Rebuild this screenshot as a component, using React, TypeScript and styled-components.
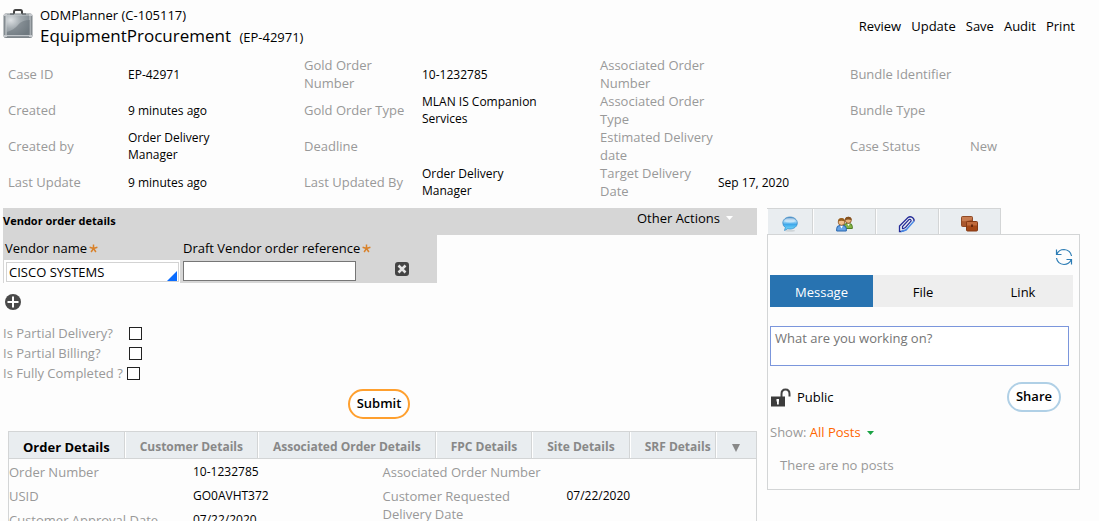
import React from "react";
import styled, { createGlobalStyle } from "styled-components";

const GlobalStyle = createGlobalStyle`
  *, *::before, *::after { box-sizing: border-box; }
  body {
    margin: 0;
    background: #fdfdfd;
    color: #000;
    font: 13px/18px "Open Sans", sans-serif;
  }
  button, input, textarea { font: inherit; color: inherit; margin: 0; }
  button { background: none; border: 0; padding: 0; cursor: pointer; }
  a { color: inherit; text-decoration: none; }
  svg { display: block; flex: none; }
  h1, h2, p, dl, dd { margin: 0; font-weight: 400; }
`;

const line = "#d3d5d6";
const muted = "#999";

const Page = styled.div`
  height: 100vh;
  overflow: hidden;
`;

const Header = styled.header`
  display: flex;
  align-items: flex-start;
  padding: 6px 24px 0 3px;
  height: 56px;
`;

const Titles = styled.div`
  flex: 1;
  padding-left: 7px;
`;

const Parent = styled.p`
  line-height: 18px;
`;

const Title = styled.h1`
  font-size: 17px;
  line-height: 24px;
  small { font-size: 13px; margin-left: 4px; }
`;

const Actions = styled.nav`
  display: flex;
  gap: 10px;
  padding-top: 11px;
`;

const Summary = styled.section`
  display: grid;
  grid-template-columns: 296fr 296fr 250fr 249fr;
  padding-left: 8px;
`;

const SummaryList = styled.dl<{ $label: number }>`
  display: grid;
  grid-template-columns: ${(p) => p.$label}px 1fr;
  grid-auto-rows: 36px;
  align-items: center;
`;

const Label = styled.dt`
  color: ${muted};
  padding-right: 4px;
`;

const Value = styled.dd<{ $muted?: boolean }>`
  max-width: 124px;
  font-size: ${(p) => (p.$muted ? 13 : 12)}px;
  line-height: 17px;
  color: ${(p) => (p.$muted ? muted : "#000")};
`;

const Body = styled.main`
  display: grid;
  grid-template-columns: minmax(0, 754fr) minmax(0, 313fr);
  gap: 10px;
  align-items: start;
  padding: 8px 19px 0 3px;
`;

const SectionBar = styled.div`
  display: flex;
  justify-content: space-between;
  height: 27px;
  padding-right: 24px;
  background: #d6d6d6;
`;

const SectionTitle = styled.h2`
  font-size: 11px;
  font-weight: 700;
  line-height: 26px;
`;

const OtherActions = styled.button`
  display: flex;
  align-items: center;
  gap: 6px;
  height: 20px;
`;

const VendorTable = styled.table`
  width: 434px;
  border-collapse: collapse;
  table-layout: fixed;
  background: #d6d6d6;
  th {
    height: 24px;
    padding: 2px 0 0 2px;
    text-align: left;
    font-weight: 400;
    white-space: nowrap;
  }
  td { height: 24px; padding: 0 2px; }
`;

const Required = styled.span`
  display: inline-block;
  padding-left: 2px;
  svg { display: inline; }
`;

const VendorCell = styled.div`
  position: relative;
  padding: 2px;
  height: 23px;
  margin: 0 -1px;
  background: #fff;
`;

const Corner = styled.svg`
  position: absolute;
  right: 3px;
  bottom: 2px;
  pointer-events: none;
`;

const TextInput = styled.input<{ $plain?: boolean }>`
  display: block;
  width: 173px;
  height: 20px;
  padding: 0 2px;
  background: #fff;
  border: 1px solid ${(p) => (p.$plain ? "#d3d3d3" : "#767676")};
  outline: 0;
`;

const IconButton = styled.button`
  display: block;
`;

const DeleteCell = styled.div`
  display: flex;
  justify-content: center;
  padding: 0 0 4px 8px;
`;

const AddRow = styled.div`
  padding: 11px 2px 13px;
`;

const CheckRow = styled.label<{ $wide: number }>`
  display: grid;
  grid-template-columns: ${(p) => p.$wide}px 13px;
  align-items: center;
  height: 20px;
  color: ${muted};
  white-space: nowrap;
`;

const CheckBox = styled.input`
  appearance: none;
  width: 13px;
  height: 13px;
  background: #fff;
  border: 1px solid #222;
`;

const Centered = styled.div`
  display: flex;
  justify-content: center;
  padding: 6px 2px 12px 0;
`;

const Pill = styled.button<{ $color: string; $width: number }>`
  width: ${(p) => p.$width}px;
  height: 30px;
  padding-bottom: 2px;
  border: 2px solid ${(p) => p.$color};
  border-radius: 15px;
  background: #fff;
  font-weight: 600;
`;

const DetailTabs = styled.div`
  display: flex;
  height: 28px;
  margin-left: 5px;
  background: #e9edf0;
  border: 1px solid ${line};
`;

const DetailTab = styled.button<{ $active?: boolean; $tight?: boolean }>`
  flex: none;
  margin-right: 1px;
  padding: 4px ${(p) => (p.$tight ? 4 : 14)}px 0 14px;
  border-right: 1px solid ${line};
  box-shadow: 1px 0 #fff;
  font-size: ${(p) => (p.$active ? 13 : 12)}px;
  font-weight: 700;
  color: ${(p) => (p.$active ? "#000" : "#888")};
  white-space: nowrap;
`;

const MoreTab = styled.button`
  flex: 1;
  display: flex;
  align-items: center;
  justify-content: center;
  padding-top: 5px;
`;

const DetailPanel = styled.div`
  display: grid;
  grid-template-columns: 1fr 1fr;
  min-height: 100px;
  margin-left: 5px;
  padding-top: 1px;
  border: solid ${line};
  border-width: 0 1px;
`;

const DetailList = styled.dl`
  display: grid;
  grid-template-columns: 184px 1fr;
  align-content: start;
  ${Label}, ${Value} { padding: 3px 0; line-height: 18px; }
  ${Label} { max-width: 162px; }
`;

const FeedTabs = styled.div`
  display: flex;
  height: 26px;
`;

const FeedTab = styled.button<{ $width: number }>`
  display: flex;
  align-items: center;
  justify-content: center;
  width: ${(p) => p.$width}px;
  padding-top: 4px;
  background: #e9edf0;
  border: solid ${line};
  border-width: 1px 1px 0 0;
  box-shadow: inset 1px 0 #fdfdfd;
`;

const Feed = styled.section`
  min-height: 256px;
  padding: 13px 6px 0 2px;
  border: 1px solid ${line};
`;

const RefreshRow = styled.div`
  display: flex;
  justify-content: flex-end;
`;

const Segments = styled.div`
  display: grid;
  grid-template-columns: 103fr 100fr 100fr;
  height: 32px;
  margin-top: 9px;
  background: #eee;
`;

const Segment = styled.button<{ $active?: boolean }>`
  padding-top: 2px;
  background: ${(p) => (p.$active ? "#2873b1" : "transparent")};
  color: ${(p) => (p.$active ? "#fff" : "#000")};
`;

const Composer = styled.textarea`
  display: block;
  width: calc(100% - 4px);
  height: 40px;
  margin-top: 19px;
  padding: 2px 4px;
  resize: none;
  background: #fff;
  border: 1px solid #7b96dc;
  outline: 0;
  &::placeholder { color: #757575; opacity: 1; }
`;

const ShareRow = styled.div`
  display: flex;
  align-items: center;
  justify-content: space-between;
  padding: 16px 12px 11px 0;
`;

const Visibility = styled.span`
  display: flex;
  align-items: center;
  gap: 6px;
`;

const Filter = styled.div`
  color: ${muted};
`;

const FilterButton = styled.button`
  color: #ff6600;
  svg { display: inline; margin-left: 6px; vertical-align: 2px; }
`;

const Empty = styled.p`
  padding: 15px 10px 0;
  color: ${muted};
`;

const Star = () => (
  <Required aria-hidden="true">
    <svg width="9" height="9" viewBox="0 0 9 9">
      <path d="M4.5 4.5V.5M4.5 4.5L8.4 3.2M4.5 4.5L6.9 8M4.5 4.5L2.1 8M4.5 4.5L.6 3.2" stroke="#d9822b" strokeWidth="1.5" />
    </svg>
  </Required>
);

const Briefcase = () => (
  <svg width="30" height="33" viewBox="0 0 30 33">
    <defs>
      <radialGradient id="case" cx=".2" cy=".25" r=".9">
        <stop offset="0" stopColor="#dde1e4" />
        <stop offset=".45" stopColor="#a4acb1" />
        <stop offset="1" stopColor="#7d878e" />
      </radialGradient>
    </defs>
    <path d="M11 8V6Q11 4 12.500 4H17.500Q19 4 19 6V8" fill="none" stroke="#444" strokeWidth="2" />
    <rect x="1" y="8" width="28" height="23.500" rx="1.500" fill="#8b9298" stroke="#7d8489" />
    <rect x="3" y="9" width="24" height="20.500" fill="url(#case)" stroke="#d0d4d7" strokeWidth=".8" />
    <path d="M4 26Q11 24 15 19T27 14V29H4Z" fill="#59646b" opacity=".4" />
    <path d="M1 9H4M26 9H29M1 30H4M26 30H29" stroke="#c4c8cc" strokeWidth="2" />
    <path d="M7 8H11M19 8H23" stroke="#4a5055" />
  </svg>
);

const Bubble = () => (
  <svg width="16" height="16" viewBox="0 0 16 16">
    <defs>
      <linearGradient id="bubble" x1="0" y1="0" x2="0" y2="1">
        <stop offset="0" stopColor="#5a8fc4" />
        <stop offset=".3" stopColor="#b4def8" />
        <stop offset=".55" stopColor="#3fa8ea" />
        <stop offset="1" stopColor="#7fe4ff" />
      </linearGradient>
    </defs>
    <ellipse cx="8" cy="14.700" rx="5" ry="1" fill="#d0d5d8" />
    <path d="M8 1C12 1 15.300 3.500 15.300 7S12 13 8 13Q6.800 13 5.800 12.700L2.500 14.500L3.300 11.500Q.8 9.800 .8 7C.8 3.500 4 1 8 1Z" fill="url(#bubble)" stroke="#3186c4" strokeWidth=".7" />
    <ellipse cx="8" cy="4.500" rx="5" ry="2.200" fill="#fff" opacity=".35" />
  </svg>
);

const People = () => (
  <svg width="17" height="16" viewBox="0 0 17 16">
    <path d="M8 13V10Q8 7.500 11 7.500H13Q16.300 7.500 16.300 10.500V12.500H9Z" fill="#85b445" stroke="#4d7d26" />
    <path d="M11 7.500L12.500 10L14 7.500Z" fill="#fff" />
    <circle cx="12.300" cy="4.300" r="3" fill="#e9b47c" stroke="#7b4518" strokeWidth=".8" />
    <path d="M9 4Q9 .7 12.300 .7T15.700 4Q12 3 9 4Z" fill="#85501d" />
    <path d="M.7 15V12.500Q.7 9.500 4 9.500H7Q10.300 9.500 10.300 12.500V15Z" fill="#65a3e6" stroke="#2865ac" />
    <path d="M4 9.500L5.500 12.500L7 9.500Z" fill="#fff" />
    <circle cx="5.500" cy="6" r="3.300" fill="#f2c18d" stroke="#8a5120" strokeWidth=".8" />
    <path d="M2 5.500Q2 2 5.500 2T9 5.500Q5.500 4 2 5.500Z" fill="#99601f" />
  </svg>
);

const Clip = () => (
  <svg width="18" height="18" viewBox="0 0 18 18" fill="none">
    <path d="M8 15L3 16.500H1.500V11L10 2.500Q12 1 14.500 2.500Q16.800 4.500 15.800 6.500" stroke="#252c98" strokeWidth="1.300" />
    <path d="M15.800 6.300L8 15L3 16.500" stroke="#4b8ae4" strokeWidth="1.500" />
    <path d="M4.500 14V11.500L11 4.500Q12.800 4 13.200 5.800L7.500 12.500L4.500 14" stroke="#252c98" strokeWidth="1.200" />
  </svg>
);

const Cases = () => (
  <svg width="17" height="17" viewBox="0 0 17 17">
    <rect x=".5" y="1.500" width="11" height="10" rx="1" fill="#a9572d" stroke="#8f4a26" />
    <path d="M1 6Q6 7 11 4.500V2H1Z" fill="#c77b50" />
    <rect x="5.500" y="6.500" width="11" height="9.500" rx="1" fill="#a34716" stroke="#843a14" />
    <path d="M6 10.500H16V7H6Z" fill="#c06a3b" />
    <path d="M10 9.500H12V12H10Z" fill="#67270c" />
  </svg>
);

const Refresh = () => (
  <svg width="18" height="18" viewBox="0 0 18 18" fill="none" stroke="#2d7db5" strokeWidth="1.200">
    <path d="M1.500 1.500V6.500H6.500M1.800 6.200Q4 1.500 9 1.500Q15.500 2 16.500 8" />
    <path d="M16.500 16.500V11.500H11.500M16.200 11.800Q14 16.500 9 16.500Q2.500 16 1.500 10" />
  </svg>
);

const Unlock = () => (
  <svg width="21" height="19" viewBox="0 0 21 19">
    <path d="M11.500 9V6Q11.500 1.500 15.500 1.500T19.500 6V8.500" fill="none" stroke="#444" strokeWidth="2" />
    <rect x="1" y="8.500" width="14" height="10" fill="#3c3c3c" />
    <path d="M6.500 11H9V13.500H8.800V16.500H7V13.500H6.500Z" fill="#fff" />
  </svg>
);

const Triangle = ({ color, width, height }: { color: string; width: number; height: number }) => (
  <svg width={width} height={height} viewBox="0 0 8 8" preserveAspectRatio="none">
    <path d="M0 0H8L4 8Z" fill={color} />
  </svg>
);

type Item = [string, string, boolean?];

const summary: { label: number; items: Item[] }[] = [
  { label: 120, items: [["Case ID", "EP-42971"], ["Created", "9 minutes ago"], ["Created by", "Order Delivery Manager"], ["Last Update", "9 minutes ago"]] },
  { label: 118, items: [["Gold Order Number", "10-1232785"], ["Gold Order Type", "MLAN IS Companion Services"], ["Deadline", ""], ["Last Updated By", "Order Delivery Manager"]] },
  { label: 118, items: [["Associated Order Number", ""], ["Associated Order Type", ""], ["Estimated Delivery date", ""], ["Target Delivery Date", "Sep 17, 2020"]] },
  { label: 120, items: [["Bundle Identifier", ""], ["Bundle Type", ""], ["Case Status", "New", true]] },
];

const details: Item[][] = [
  [["Order Number", "10-1232785"], ["USID", "GO0AVHT372"], ["Customer Approval Date", "07/22/2020"]],
  [["Associated Order Number", ""], ["Customer Requested Delivery Date", "07/22/2020"]],
];

const renderItems = (items: Item[]) =>
  items.map(([label, value, isMuted]) => (
    <React.Fragment key={label}>
      <Label>{label}</Label>
      <Value $muted={isMuted}>{value}</Value>
    </React.Fragment>
  ));

export default function App() {
  return (
    <Page>
      <GlobalStyle />
      <Header>
        <Briefcase />
        <Titles>
          <Parent>ODMPlanner (C-105117)</Parent>
          <Title>
            EquipmentProcurement <small>(EP-42971)</small>
          </Title>
        </Titles>
        <Actions>
          {["Review", "Update", "Save", "Audit", "Print"].map((name) => (
            <a href="#" key={name}>{name}</a>
          ))}
        </Actions>
      </Header>

      <Summary>
        {summary.map((group) => (
          <SummaryList key={group.items[0][0]} $label={group.label}>
            {renderItems(group.items)}
          </SummaryList>
        ))}
      </Summary>

      <Body>
        <section>
          <SectionBar>
            <SectionTitle>Vendor order details</SectionTitle>
            <OtherActions>
              Other Actions <Triangle color="#fff" width={7} height={4} />
            </OtherActions>
          </SectionBar>
          <VendorTable>
            <colgroup>
              <col width="178" />
              <col width="178" />
              <col width="78" />
            </colgroup>
            <thead>
              <tr>
                <th><label htmlFor="vendor">Vendor name</label><Star /></th>
                <th><label htmlFor="reference">Draft Vendor order reference</label><Star /></th>
                <th />
              </tr>
            </thead>
            <tbody>
              <tr>
                <td>
                  <VendorCell>
                    <TextInput id="vendor" $plain defaultValue="CISCO SYSTEMS" />
                    <Corner width="10" height="10" viewBox="0 0 10 10"><path d="M10 0V10H0Z" fill="#0a6cff" /></Corner>
                  </VendorCell>
                </td>
                <td><TextInput id="reference" /></td>
                <td>
                  <DeleteCell>
                    <IconButton aria-label="Delete row">
                      <svg width="14" height="14" viewBox="0 0 14 14">
                        <rect width="14" height="14" rx="3" fill="#444" />
                        <path d="M3.500 3.500L10.500 10.500M10.500 3.500L3.500 10.500" stroke="#e4e4e4" strokeWidth="2.500" />
                      </svg>
                    </IconButton>
                  </DeleteCell>
                </td>
              </tr>
            </tbody>
          </VendorTable>
          <AddRow>
            <IconButton aria-label="Add row">
              <svg width="16" height="16" viewBox="0 0 16 16">
                <circle cx="8" cy="8" r="8" fill="#4a4a4a" />
                <path d="M8 2.500V13.500M2.500 8H13.500" stroke="#fff" strokeWidth="2" />
              </svg>
            </IconButton>
          </AddRow>
          <CheckRow $wide={126}>Is Partial Delivery?<CheckBox type="checkbox" /></CheckRow>
          <CheckRow $wide={126}>Is Partial Billing?<CheckBox type="checkbox" /></CheckRow>
          <CheckRow $wide={124}>Is Fully Completed ?<CheckBox type="checkbox" /></CheckRow>
          <Centered>
            <Pill $color="#ffa02f" $width={62}>Submit</Pill>
          </Centered>
          <DetailTabs>
            <DetailTab $active>Order Details</DetailTab>
            <DetailTab>Customer Details</DetailTab>
            <DetailTab>Associated Order Details</DetailTab>
            <DetailTab>FPC Details</DetailTab>
            <DetailTab>Site Details</DetailTab>
            <DetailTab $tight>SRF Details</DetailTab>
            <MoreTab aria-label="More tabs"><Triangle color="#888" width={8} height={8} /></MoreTab>
          </DetailTabs>
          <DetailPanel>
            {details.map((items) => (
              <DetailList key={items[0][0]}>{renderItems(items)}</DetailList>
            ))}
          </DetailPanel>
        </section>

        <aside>
          <FeedTabs>
            <FeedTab $width={46} aria-label="Messages"><Bubble /></FeedTab>
            <FeedTab $width={63} aria-label="Participants"><People /></FeedTab>
            <FeedTab $width={63} aria-label="Attachments"><Clip /></FeedTab>
            <FeedTab $width={62} aria-label="Related cases"><Cases /></FeedTab>
          </FeedTabs>
          <Feed>
            <RefreshRow>
              <IconButton aria-label="Refresh"><Refresh /></IconButton>
            </RefreshRow>
            <Segments>
              <Segment $active>Message</Segment>
              <Segment>File</Segment>
              <Segment>Link</Segment>
            </Segments>
            <Composer aria-label="Message" placeholder="What are you working on?" />
            <ShareRow>
              <Visibility><Unlock />Public</Visibility>
              <Pill $color="#b0d0e6" $width={54}>Share</Pill>
            </ShareRow>
            <Filter>
              Show: <FilterButton>All Posts<Triangle color="#1ba345" width={7} height={4} /></FilterButton>
            </Filter>
            <Empty>There are no posts</Empty>
          </Feed>
        </aside>
      </Body>
    </Page>
  );
}
